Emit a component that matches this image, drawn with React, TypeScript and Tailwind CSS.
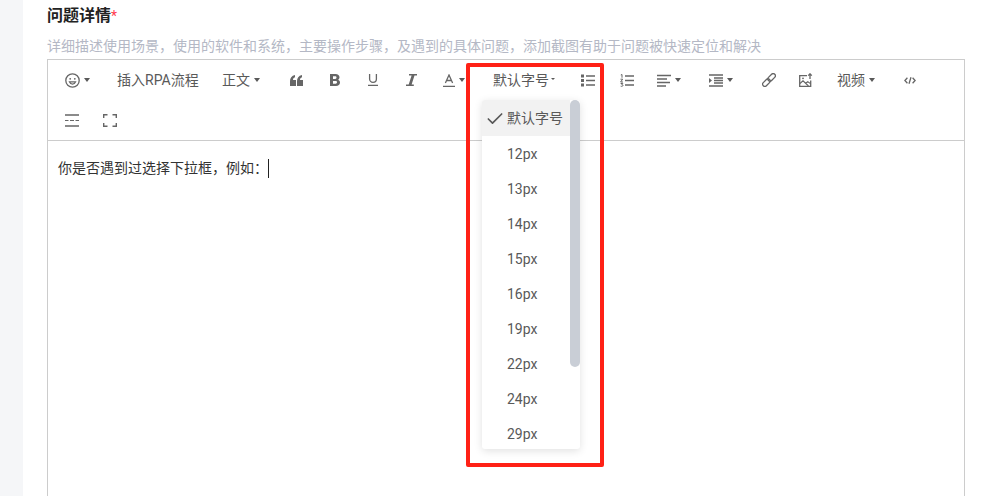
import type { ReactNode } from "react";
import { Check } from "lucide-react";

const SIZES = ["12px", "13px", "14px", "15px", "16px", "19px", "22px", "24px", "29px"];

function Caret() {
  return <span className="ml-[4px] h-0 w-0 border-x-[3px] border-t-[4px] border-x-transparent border-t-[#595959]" />;
}

function Ico({ children, w = 14, h = 14 }: { children: ReactNode; w?: number; h?: number }) {
  return (
    <svg width={w} height={h} viewBox={`0 0 ${w} ${h}`} fill="none" stroke="#666666" strokeWidth="1.3" className="block">
      {children}
    </svg>
  );
}

function Solid({ d }: { d: string }) {
  return <path d={d} fill="#666666" stroke="none" fillRule="evenodd" />;
}

export default function App() {
  return (
    <div
      className="flex h-[496px] w-[983px] overflow-hidden bg-white text-[#595959]"
      style={{ fontFamily: 'Roboto, "Noto Sans CJK SC", sans-serif' }}
    >
      <div className="w-[23px] shrink-0 bg-[#f5f6f8]" />

      <div className="relative flex-1 pl-[24px] pr-[18px]">
        <div className="flex h-[30px] items-center pt-[1px] text-[16px] font-semibold leading-none text-[#222222]">
          问题详情<span className="text-[14px] font-normal text-[#ff3b4e]">*</span>
        </div>
        <div className="mt-[7px] h-[22px] text-[14px] leading-[18px] text-[#b4b8c5]">
          详细描述使用场景，使用的软件和系统，主要操作步骤，及遇到的具体问题，添加截图有助于问题被快速定位和解决
        </div>

        <div className="h-[460px] border border-[#cccccc]">
          <div className="border-b border-[#cccccc]">
            <div className="flex h-[40px] items-center text-[14px]">
              <div className="ml-[17px] flex w-[52px] items-center">
                <Ico w={15} h={15}>
                  <circle cx="7.5" cy="7.5" r="6.7" />
                  <circle cx="5.2" cy="5.8" r="0.9" fill="#666666" stroke="none" />
                  <circle cx="9.8" cy="5.8" r="0.9" fill="#666666" stroke="none" />
                  <path strokeWidth="1.2" d="M4.4 8.9c.6 1.5 1.7 2.2 3.1 2.2s2.5-.7 3.1-2.2z" />
                </Ico>
                <Caret />
              </div>
              <div className="w-[105px]">插入RPA流程</div>
              <div className="flex w-[68px] items-center">正文<Caret /></div>
              <div className="w-[40px]">
                <Ico w={13} h={11}>
                  <Solid d="M0 11V6C0 3 1.6.8 5 0v2.2C3.6 2.6 3 3.5 3 5h3v6z" />
                  <Solid d="M7 11V6c0-3 1.6-5.2 5-6v2.2c-1.4.4-2 1.3-2 2.8h3v6z" />
                </Ico>
              </div>
              <div className="w-[38px]">
                <Ico w={10} h={12}>
                  <Solid d="M0 0h5.5C8 0 9.5 1.3 9.5 3.2c0 1.2-.6 2.1-1.5 2.6 1.2.4 2 1.4 2 2.8C10 10.7 8.4 12 6 12H0zM3 2.3v2.6h2.2c.8 0 1.3-.5 1.3-1.3s-.5-1.3-1.3-1.3zM3 7v2.7h2.6c.9 0 1.4-.5 1.4-1.35S6.5 7 5.6 7z" />
                </Ico>
              </div>
              <div className="w-[38px]">
                <Ico w={10} h={12}>
                  <path d="M1.6 0v5a3.4 3.4 0 0 0 6.8 0V0M0 11.3h10" />
                </Ico>
              </div>
              <div className="w-[37px]">
                <Ico w={11} h={12}>
                  <Solid d="M3 0h8v1.6H8.5L5.6 10.4h2.2V12H0v-1.6h2.7L5.6 1.6H3z" />
                </Ico>
              </div>
              <div className="flex w-[50px] items-center">
                <Ico w={12} h={13}>
                  <path d="M2.4 9 6 1l3.6 8M3.6 6.5h4.8M0 12.4h12" />
                </Ico>
                <Caret />
              </div>
              <div className="flex w-[88px] items-center">
                默认字号
                <span className="ml-[2px] mb-[3px] h-0 w-0 border-x-[2px] border-t-[2px] border-x-transparent border-t-[#595959]" />
              </div>
              <div className="w-[39px]">
                <Ico h={13}>
                  <Solid d="M0 .5h3v3H0zM0 5h3v3H0zM0 9.5h3v3H0z" />
                  <path strokeWidth="1.6" d="M5 2h9M5 6.5h9M5 11h9" />
                </Ico>
              </div>
              <div className="w-[37px]">
                <Ico h={13}>
                  <path strokeWidth="1" d="M.8 1 2 .5v3.2M.5 5.2h2.2L.6 8h2.4M.6 9.5h2.2l-1 1.2c1 0 1.3.4 1.1 1-.2.7-1.4.8-2.2.5" />
                  <path strokeWidth="1.4" d="M5 2h9M5 6.5h9M5 11h9" />
                </Ico>
              </div>
              <div className="flex w-[52px] items-center">
                <Ico h={13}>
                  <path strokeWidth="1.4" d="M0 1.5h14M0 5h10M0 8.5h13M0 12h9" />
                </Ico>
                <Caret />
              </div>
              <div className="flex w-[53px] items-center">
                <Ico h={13}>
                  <path strokeWidth="1.6" d="M0 1h14M5 4h9M5 6.5h9M5 9h9M0 12h14" />
                  <Solid d="M0 4l3 2.5L0 9z" />
                </Ico>
                <Caret />
              </div>
              <div className="w-[37px]">
                <Ico w={14} h={14}>
                  <rect x="-2.2" y="-4.4" width="4.4" height="8.8" rx="2.2" transform="translate(4.4 9.6) rotate(45)" />
                  <rect x="-2.2" y="-4.4" width="4.4" height="8.8" rx="2.2" transform="translate(9.6 4.4) rotate(45)" />
                </Ico>
              </div>
              <div className="w-[38px]">
                <Ico h={14}>
                  <path d="M8 2.7H.7v10.6h11V7.5" />
                  <path strokeWidth="1.1" d="M1 10.5 4 7.8l5.5 5.2M6.6 10.3l2.2-1.7 2.6 2" />
                  <circle cx="4" cy="5.3" r="0.9" fill="#666666" stroke="none" />
                  <path d="M11 6V.8M9.2 2.6 11 .8l1.8 1.8" />
                </Ico>
              </div>
              <div className="flex w-[67px] items-center">视频<Caret /></div>
              <div>
                <Ico w={12} h={7}>
                  <path d="M3.4.8.9 3.5l2.5 2.7M8.6.8l2.5 2.7-2.5 2.7M7 .3 5 6.7" />
                </Ico>
              </div>
            </div>
            <div className="flex h-[40px] items-center pl-[17px]">
              <div className="w-[38px]">
                <Ico h={13}>
                  <path strokeWidth="1.4" d="M0 1h14M0 12h14" />
                  <path strokeWidth="1.2" d="M0 6.5h3.5M5 6.5h4M10.5 6.5H14" />
                </Ico>
              </div>
              <div>
                <Ico h={13}>
                  <path strokeWidth="1.4" d="M.7 4V.7H4.5M9.5.7h3.8V4M.7 9v3.3H4.5M9.5 12.3h3.8V9" />
                </Ico>
              </div>
            </div>
          </div>
          <div className="flex items-center pl-[10px] pt-[17px] text-[14px] leading-[20px] text-[#333333]">
            你是否遇到过选择下拉框，例如：
            <span className="h-[19px] w-px bg-[#222222]" />
          </div>
        </div>

        <div className="absolute left-[443px] top-[63px] h-[404px] w-[138px] rounded-[2px] border-[4px] border-[#ff2116]" />

        <div className="absolute left-[459px] top-[100px] h-[349px] w-[98px] overflow-hidden rounded-[3px] bg-white text-[14px] shadow-[0_2px_8px_rgba(0,0,0,0.12)]">
          <div className="flex h-[36px] w-[88px] items-center bg-[#f2f2f2] pt-[1px]">
            <Check size={20} strokeWidth={2} className="ml-[3px] mr-[2px]" />
            默认字号
          </div>
          {SIZES.map((size) => (
            <div key={size} className="flex h-[35px] items-center pl-[25px] pt-[2px]">{size}</div>
          ))}
          <div className="absolute right-0 top-0 h-[267px] w-[10px] rounded-[5px] bg-[#c9ced6]" />
        </div>
      </div>
    </div>
  );
}
